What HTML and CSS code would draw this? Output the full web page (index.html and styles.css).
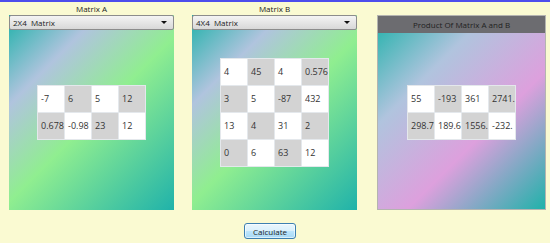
FILE: index.html
```html
<!DOCTYPE html>
<html lang="en">
<head>
    <meta charset="UTF-8">
    <title>Matrix Multiplication</title>
    <link rel="stylesheet" href="styles.css">
</head>
<body>
    <div class="window">
        <div class="matrices">
            <section class="col col-a">
                <div class="caption">Matrix A</div>
                <div class="panel">
                    <div class="select"><span>2X4  Matrix</span><span class="arrow"></span></div>
                    <div class="grid">
                        <div class="cell">-7</div><div class="cell alt">6</div><div class="cell">5</div><div class="cell alt">12</div>
                        <div class="cell alt">0.678</div><div class="cell">-0.98</div><div class="cell alt">23</div><div class="cell">12</div>
                    </div>
                </div>
            </section>

            <section class="col col-b">
                <div class="caption">Matrix B</div>
                <div class="panel">
                    <div class="select"><span>4X4  Matrix</span><span class="arrow"></span></div>
                    <div class="grid">
                        <div class="cell">4</div><div class="cell alt">45</div><div class="cell">4</div><div class="cell alt">0.576</div>
                        <div class="cell alt">3</div><div class="cell">5</div><div class="cell alt">-87</div><div class="cell">432</div>
                        <div class="cell">13</div><div class="cell alt">4</div><div class="cell">31</div><div class="cell alt">2</div>
                        <div class="cell alt">0</div><div class="cell">6</div><div class="cell alt">63</div><div class="cell">12</div>
                    </div>
                </div>
            </section>

            <section class="col col-c">
                <div class="caption"></div>
                <div class="panel panel-result">
                    <div class="result-header">Product Of Matrix A and B</div>
                    <div class="grid">
                        <div class="cell">55</div><div class="cell alt">-193</div><div class="cell">361</div><div class="cell alt">2741.</div>
                        <div class="cell alt">298.7</div><div class="cell">189.6</div><div class="cell alt">1556.</div><div class="cell">-232.</div>
                    </div>
                </div>
            </section>
        </div>

        <div class="actions">
            <button type="button">Calculate</button>
        </div>
    </div>
</body>
</html>
```

FILE: styles.css
```css
body {
    margin: 0;
    height: 243px;
    overflow: hidden;
    background-color: #fafad2;
    font-family: "Open Sans", "Noto Sans", sans-serif;
    color: #222;
}
.window {
    border-top: 2px solid #4c4cec;
}
.matrices {
    display: flex;
    padding-left: 9px;
}
.col {
    display: flex;
    flex-direction: column;
}
.col-a {
    width: 165px;
}
.col-b {
    width: 165px;
    margin-left: 18px;
}
.col-c {
    width: 169px;
    margin-left: 20px;
}
.caption {
    height: 13px;
    font-size: 8px;
    line-height: 13px;
    text-align: center;
}
.panel {
    height: 195px;
    display: grid;
    grid-template: 1fr / 1fr;
    background: linear-gradient(135deg, #20b2aa 0%, #b0c4de 25%, #90ee90 52%, #20b2aa 100%);
}
.panel > * {
    grid-area: 1 / 1;
}
.panel-result {
    box-sizing: border-box;
    border: 1px solid #b4b4b0;
    background: linear-gradient(135deg, #20b2aa 0%, #b0c4de 30%, #dda0dd 62%, #20b2aa 100%);
}
.select {
    align-self: start;
    height: 15px;
    box-sizing: border-box;
    display: flex;
    justify-content: space-between;
    align-items: center;
    padding: 0 6px 0 3px;
    border: 1px solid #8c8c8c;
    border-radius: 2px;
    background: linear-gradient(#f4f4f4, #e6e6e6 50%, #d8d8d8);
    font-size: 8px;
    white-space: pre;
}
.arrow {
    width: 0;
    height: 0;
    border-left: 3px solid transparent;
    border-right: 3px solid transparent;
    border-top: 3px solid #111;
}
.result-header {
    align-self: start;
    height: 17px;
    background-color: #6c6c70;
    font-size: 8px;
    line-height: 17px;
    text-align: center;
}
.grid {
    place-self: center;
    display: grid;
    grid-template-columns: repeat(4, 26px);
    grid-auto-rows: 26px;
    gap: 1px;
    padding: 1px;
    background-color: #e4e8ec;
}
.cell {
    background-color: #fff;
    padding-left: 3px;
    font-size: 9px;
    line-height: 26px;
    color: #333;
    white-space: nowrap;
    overflow: hidden;
}
.cell.alt {
    background-color: #d3d3d3;
}
.actions {
    display: flex;
    justify-content: center;
    padding: 13px 10px 0 0;
}
.actions button {
    width: 52px;
    height: 16px;
    padding: 0;
    font-family: "Open Sans", "Noto Sans", sans-serif;
    font-size: 8px;
    color: #222;
    border: 1px solid #3c7fb1;
    border-radius: 3px;
    background: linear-gradient(#eaf6fd 0%, #d9f0fc 50%, #bee6fd 50%, #a7d9f5 100%);
    box-shadow: inset 0 0 0 1px rgba(255, 255, 255, 0.6);
}
```
